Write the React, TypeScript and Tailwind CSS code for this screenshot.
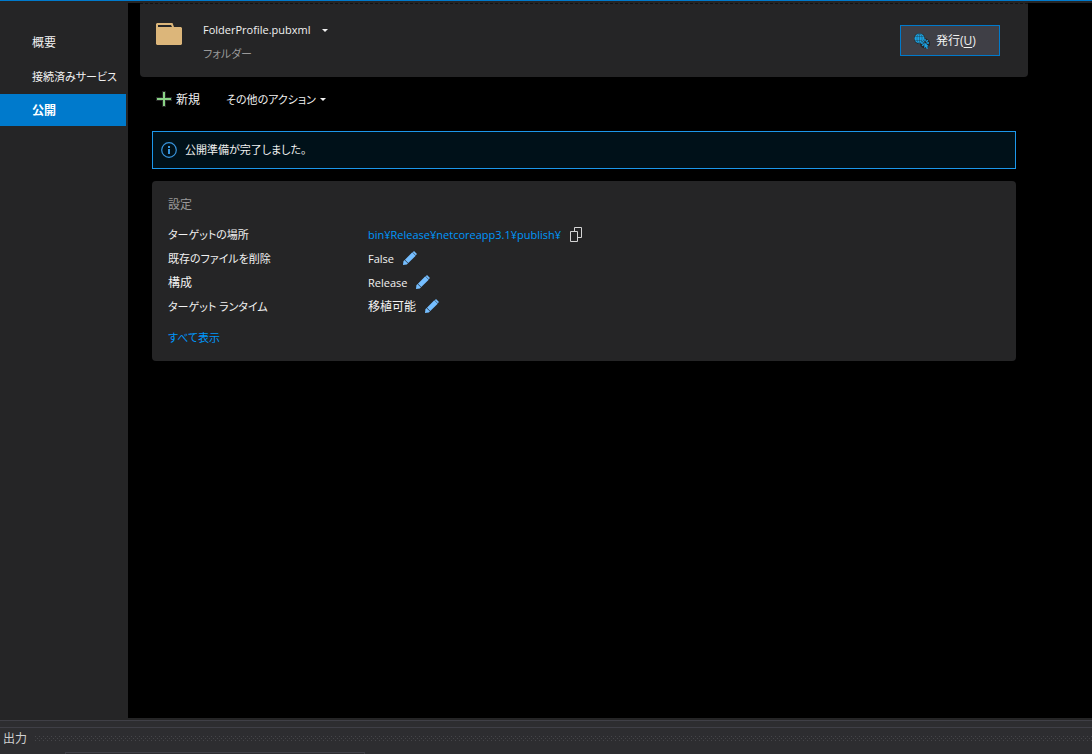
import { useState } from "react";

type NavItem = { id: string; label: string };
type Setting = { label: string; value: string; kind: "path" | "editable" };

const navItems: NavItem[] = [
  { id: "overview", label: "概要" },
  { id: "services", label: "接続済みサービス" },
  { id: "publish", label: "公開" },
];

const settings: Setting[] = [
  { label: "ターゲットの場所", value: "bin¥Release¥netcoreapp3.1¥publish¥", kind: "path" },
  { label: "既存のファイルを削除", value: "False", kind: "editable" },
  { label: "構成", value: "Release", kind: "editable" },
  { label: "ターゲット ランタイム", value: "移植可能", kind: "editable" },
];

// pure kanji stays at 12px, kana and latin are set one step smaller
const textSize = (text: string) => (/^[\u4e00-\u9fff]+$/.test(text) ? "text-xs" : "text-[11px]");

function FolderIcon() {
  return (
    <svg width="26" height="22" viewBox="0 0 26 22" aria-hidden="true">
      <path
        fill="#dcb67a"
        fillRule="evenodd"
        d="M1 0h15.500L18 4h7l1 1v16l-1 1H1l-1-1V1zM2 2v2h14l-1-2z"
      />
    </svg>
  );
}

function PlusIcon() {
  return (
    <svg width="16" height="16" viewBox="0 0 16 16" aria-hidden="true">
      <path fill="#252526" d="M6 0h4v6h6v4h-6v6H6v-6H0V6h6z" />
      <path fill="#89d185" d="M7 1h2v6h6v2H9v6H7V9H1V7h6z" />
    </svg>
  );
}

function CaretIcon() {
  return (
    <svg width="6" height="3" viewBox="0 0 6 3" aria-hidden="true">
      <path fill="#f1f1f1" d="M0 0h6L3 3z" />
    </svg>
  );
}

function InfoIcon() {
  return (
    <svg width="16" height="16" viewBox="0 0 16 16" fill="none" aria-hidden="true">
      <circle cx="8" cy="8" r="7.300" stroke="#3794dc" strokeWidth="1.200" />
      <path fill="#3794dc" d="M7 4h2v2H7zM7 7h2v5H7z" />
    </svg>
  );
}

function CopyIcon() {
  return (
    <svg width="13" height="15" viewBox="0 0 13 15" fill="none" aria-hidden="true">
      <path stroke="#d4d4d4" d="M.5 4.500h7v10h-7zM4.500 4.500v-4h7v10h-4" />
    </svg>
  );
}

function PencilIcon() {
  return (
    <svg width="14" height="14" viewBox="0 0 14 14" aria-hidden="true">
      <path
        fill="#75beff"
        d="M11 0 14 3 12.800 4.200 9.800 1.200zM9.300 1.300 12.700 4.700 5.300 12.100 1.900 8.700zM1.400 9 5 12.600 3.800 13.600 0 14 .4 10.200z"
      />
    </svg>
  );
}

function PublishIcon() {
  return (
    <svg width="16" height="16" viewBox="0 0 16 16" fill="none" aria-hidden="true">
      <circle cx="5.500" cy="5.500" r="5.500" fill="#252526" />
      <circle cx="11" cy="10.500" r="5" fill="#252526" />
      <circle cx="5.500" cy="5.500" r="5" fill="#1ba1e2" />
      <path stroke="#252526" strokeOpacity=".7" strokeWidth=".5" d="M1 3.500h9M1 7.500h9M5.500 1v9" />
      <ellipse cx="5.500" cy="5.500" rx="2.500" ry="4.700" stroke="#252526" strokeOpacity=".7" strokeWidth=".5" />
      <circle cx="11.500" cy="10.500" r="4" fill="#252526" />
      <path
        stroke="#1ba1e2"
        strokeWidth="1.400"
        d="M11 6v2.200M7 10h2.500M8.200 7.200l1.600 1.600M13.800 7.200l-1.600 1.600M8.200 12.800l1.600-1.600M12.500 10H15"
      />
      <path fill="#1ba1e2" d="m10.300 9.200 4.500 4.100-1.700.2.900 1.900-1.200.6-1-2-1.500 1.200z" />
    </svg>
  );
}

function Sidebar() {
  const [active, setActive] = useState("publish");

  return (
    <nav className="w-32 shrink-0 bg-[#252526] pt-[23px] pr-0.5">
      <ul className="space-y-0.5">
        {navItems.map((item) => (
          <li key={item.id}>
            <button
              type="button"
              onClick={() => setActive(item.id)}
              className={`flex h-8 w-full items-center pt-0.5 pl-8 whitespace-nowrap ${textSize(item.label)} ${
                active === item.id ? "bg-[#007acc] font-bold text-white" : "hover:bg-[#3e3e40]"
              }`}
            >
              {item.label}
            </button>
          </li>
        ))}
      </ul>
    </nav>
  );
}

function ProfileHeader() {
  return (
    <header className="flex h-[74px] items-start rounded-b border-t border-dashed border-[#121212] bg-[#252526] pr-7 pl-4">
      <div className="pt-[19px]">
        <FolderIcon />
      </div>
      <div className="ml-[21px] flex-1 pt-3.5 text-[11px]">
        <button type="button" className="flex h-6 items-center gap-3">
          FolderProfile.pubxml
          <CaretIcon />
        </button>
        <p className="h-6 leading-6 text-[#999999]">フォルダー</p>
      </div>
      <button
        type="button"
        className="mt-[21px] flex h-[31px] w-[100px] items-center gap-1.5 border border-[#007acc] bg-[#3f3f46] pl-[13px]"
      >
        <PublishIcon />
        <span>
          発行(<span className="underline underline-offset-2">U</span>)
        </span>
      </button>
    </header>
  );
}

function SettingsCard() {
  return (
    <section className="mt-3 rounded bg-[#252526] px-4 pt-3.5 pb-3">
      <h2 className="h-6 leading-5 text-[#999999]">設定</h2>
      <dl className="mt-[3px]">
        {settings.map((s) => (
          <div key={s.label} className="flex h-6 items-center">
            <dt className={`w-[200px] shrink-0 pt-0.5 ${textSize(s.label)}`}>{s.label}</dt>
            <dd className={`flex items-center gap-[9px] ${textSize(s.value)}`}>
              {s.kind === "path" ? (
                <a href="#target" className="pt-0.5 text-[#0097fb]">
                  {s.value}
                </a>
              ) : (
                <span className="pt-0.5">{s.value}</span>
              )}
              <button type="button" aria-label={s.label}>
                {s.kind === "path" ? <CopyIcon /> : <PencilIcon />}
              </button>
            </dd>
          </div>
        ))}
      </dl>
      <a href="#all" className="mt-2 block h-[23px] w-fit text-[11px] leading-6 text-[#0097fb]">
        すべて表示
      </a>
    </section>
  );
}

function OutputPanel() {
  return (
    <footer className="h-[34px] shrink-0 border-t border-[#3f3f46] bg-[#2d2d30]">
      <div className="mt-1.5 flex h-6 items-center gap-2 border-t border-[#3f3f46] pb-0.5 pl-[3px]">
        <h2 className="shrink-0 text-[#d0d0d0]">出力</h2>
        <svg className="h-[5px] flex-1" aria-hidden="true">
          <defs>
            <pattern id="grip" width="4" height="4" patternUnits="userSpaceOnUse">
              <rect width="1" height="1" fill="#46464a" />
              <rect x="2" y="2" width="1" height="1" fill="#46464a" />
            </pattern>
          </defs>
          <rect width="100%" height="5" fill="url(#grip)" />
        </svg>
      </div>
      <div className="mt-px ml-[65px] h-0.5 w-[300px] border border-b-0 border-[#3f3f46]" />
    </footer>
  );
}

export default function App() {
  return (
    <div className="flex h-screen flex-col bg-[#252526] font-['Open_Sans','Noto_Sans_CJK_JP',sans-serif] text-xs text-[#f1f1f1] [font-feature-settings:'palt']">
      <div className="h-[3px] shrink-0 border-t border-[#007acc]" />
      <div className="flex min-h-0 flex-1">
        <Sidebar />
        <main className="flex-1 bg-black pl-3">
          <div className="max-w-[888px]">
            <ProfileHeader />
            <div className="flex h-[54px] items-start gap-[26px] px-4 pt-2.5">
              <button type="button" className="flex h-6 items-center gap-1">
                <PlusIcon />
                <span className="pt-0.5">新規</span>
              </button>
              <button type="button" className="flex h-6 items-center gap-1 text-[11px]">
                <span className="pt-0.5">その他のアクション</span>
                <CaretIcon />
              </button>
            </div>
            <div className="px-3">
              <div
                role="status"
                className="flex h-[38px] items-center gap-2 border border-[#1c97ea] bg-[#001119] px-2 text-[11px]"
              >
                <InfoIcon />
                公開準備が完了しました。
              </div>
              <SettingsCard />
            </div>
          </div>
        </main>
      </div>
      <div className="h-0.5 shrink-0" />
      <OutputPanel />
    </div>
  );
}
